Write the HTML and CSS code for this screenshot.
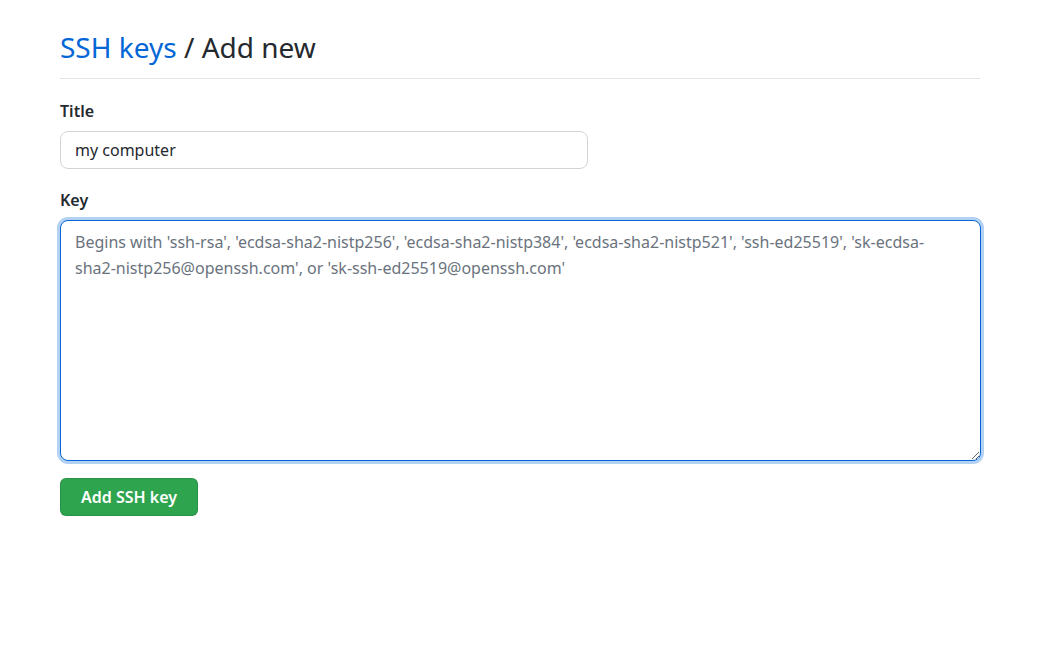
FILE: index.html
```html
<!DOCTYPE html>
<html lang="en">

<head>
    <meta charset="UTF-8">
    <meta name="viewport" content="width=device-width, initial-scale=1.0">
    <title>SSH keys / Add new</title>
    <link rel="stylesheet" href="styles.css">
</head>

<body>
    <div class="page">
        <div class="subhead">
            <h2 class="subhead-heading"><a href="#">SSH keys</a> / Add new</h2>
        </div>
        <form class="key-form">
            <div class="form-group">
                <label for="title">Title</label>
                <input type="text" id="title" class="form-control short" value="my computer">
            </div>
            <div class="form-group key-group">
                <label for="key">Key</label>
                <textarea id="key" class="form-control key-input" placeholder="Begins with 'ssh-rsa', 'ecdsa-sha2-nistp256', 'ecdsa-sha2-nistp384', 'ecdsa-sha2-nistp521', 'ssh-ed25519', 'sk-ecdsa-sha2-nistp256@openssh.com', or 'sk-ssh-ed25519@openssh.com'"></textarea>
            </div>
            <button type="button" class="btn-primary">Add SSH key</button>
        </form>
    </div>
</body>

</html>
```

FILE: styles.css
```css
body {
    font-family: "Noto Sans", "Open Sans", sans-serif;
    color: #24292e;
    background-color: #fff;
    margin: 0;
    padding: 0;
}

.page {
    width: 920px;
    margin-left: 60px;
    padding-top: 28px;
}

.subhead {
    border-bottom: 1px solid #e1e4e8;
    padding-bottom: 11px;
    margin-bottom: 21px;
}

.subhead-heading {
    font-size: 28px;
    font-weight: 400;
    margin: 0;
    line-height: 1.4;
}

.subhead-heading a {
    color: #0366d6;
    text-decoration: none;
}

.form-group {
    margin-bottom: 20px;
}

.form-group.key-group {
    margin-bottom: 17px;
}

.form-group label {
    display: block;
    font-size: 16px;
    font-weight: 600;
    margin-bottom: 9px;
}

.form-control {
    box-sizing: border-box;
    font-family: inherit;
    font-size: 16px;
    color: #24292e;
    padding: 6px 14px;
    border: 1px solid #d1d5da;
    border-radius: 8px;
    background-color: #fff;
    outline: none;
}

.short {
    width: 528px;
    height: 38px;
}

.key-input {
    display: block;
    width: 921px;
    height: 241px;
    line-height: 1.6;
    padding: 9px 24px 10px 14px;
    border-color: #0366d6;
    box-shadow: 0 0 0 3px rgba(3, 102, 214, 0.3);
    resize: vertical;
}

.key-input::placeholder {
    color: #6a737d;
}

.btn-primary {
    font-family: inherit;
    font-size: 16px;
    font-weight: 600;
    color: #fff;
    background-color: #2ea44f;
    border: 1px solid rgba(27, 31, 35, 0.15);
    border-radius: 6px;
    padding: 0 20px;
    height: 38px;
    cursor: pointer;
}
```
